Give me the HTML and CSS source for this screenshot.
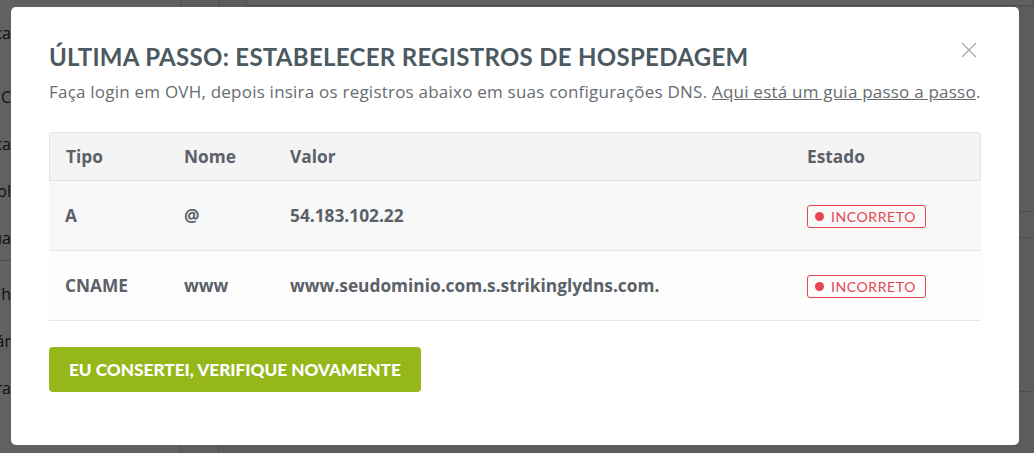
FILE: index.html
```html
<!DOCTYPE html>
<html lang="pt">
<head>
    <meta charset="UTF-8">
    <title>Registros de hospedagem</title>
    <link rel="stylesheet" href="styles.css">
</head>
<body>
    <div class="page">
        <div class="sidebar">
            <div class="side-item first">Publica</div>
            <div class="side-item">Domínio C</div>
            <div class="side-item">Estatística</div>
            <div class="side-item">Símbol</div>
            <div class="side-item">Loja virtua</div>
            <div class="side-sep"></div>
            <div class="side-item">Membros h</div>
            <div class="side-item">Formulár</div>
            <div class="side-item">Ajuda extra</div>
        </div>
        <div class="rail"></div>
        <div class="main">
            <div class="topbox"></div>
            <div class="hero"></div>
            <div class="row-line"></div>
            <div class="row-line tall"></div>
        </div>
    </div>

    <div class="overlay"></div>

    <div class="modal">
        <button class="close" aria-label="Fechar">
            <svg width="16" height="16" viewBox="0 0 16 16">
                <path d="M1 1 L15 15 M15 1 L1 15" stroke="#a9a9a9" stroke-width="1.3" fill="none"/>
            </svg>
        </button>
        <h2 class="title">Última passo: estabelecer registros de hospedagem</h2>
        <p class="lead">Faça login em OVH, depois insira os registros abaixo em suas configurações DNS. <a href="#">Aqui está um guia passo a passo</a>.</p>

        <table class="records">
            <thead>
                <tr>
                    <th class="c-type">Tipo</th>
                    <th class="c-name">Nome</th>
                    <th class="c-value">Valor</th>
                    <th class="c-state">Estado</th>
                </tr>
            </thead>
            <tbody>
                <tr>
                    <td>A</td>
                    <td>@</td>
                    <td>54.183.102.22</td>
                    <td><span class="badge"><i class="dot"></i>Incorreto</span></td>
                </tr>
                <tr>
                    <td>CNAME</td>
                    <td>www</td>
                    <td>www.seudominio.com.s.strikinglydns.com.</td>
                    <td><span class="badge"><i class="dot"></i>Incorreto</span></td>
                </tr>
            </tbody>
        </table>

        <button class="check">Eu consertei, verifique novamente</button>
    </div>
</body>
</html>
```

FILE: styles.css
```css
body {
    margin: 0;
    font-family: "Open Sans", sans-serif;
    background: #f2f2f2;
    height: 453px;
    overflow: hidden;
}

/* page behind the dialog */
.page {
    display: flex;
    height: 453px;
}

.sidebar {
    width: 180px;
    background: #ffffff;
    border-right: 1px solid #d0d0d0;
    padding-top: 20px;
}

.side-item {
    height: 47px;
    line-height: 26px;
    font-size: 16px;
    color: #2a2a2a;
    white-space: nowrap;
    direction: rtl;
    width: 11px;
    overflow: hidden;
}

.side-item.first {
    height: 64px;
}

.side-sep {
    border-top: 1px solid #c8c8c8;
    margin-top: -12px;
    height: 20px;
}

.rail {
    width: 37px;
    background: #f7f7f7;
    border-right: 1px solid #d4d4d4;
}

.main {
    flex: 1;
    padding: 0 0 0 27px;
}

.topbox {
    height: 5px;
    border: 1px solid #ccc;
    border-top: none;
    border-radius: 0 0 3px 3px;
    background: #fff;
}

.hero {
    height: 205px;
    background: #f2effc;
    border-bottom: 1px solid #c9c9c9;
}

.row-line {
    height: 25px;
    border-bottom: 1px solid #c9c9c9;
}

.row-line.tall {
    height: 153px;
}

.overlay {
    position: fixed;
    inset: 0;
    background: rgba(0, 0, 0, 0.62);
}

/* dialog */
.modal {
    position: fixed;
    left: 11px;
    top: 7px;
    width: 1008px;
    height: 438px;
    box-sizing: border-box;
    padding: 34px 38px 0 38px;
    background: #fff;
    border-radius: 5px;
}

.close {
    position: absolute;
    right: 42px;
    top: 35px;
    padding: 0;
    border: 0;
    background: none;
}

.title {
    margin: 0;
    font-family: Lato, sans-serif;
    font-weight: 700;
    font-size: 24px;
    line-height: 32px;
    text-transform: uppercase;
    color: #4b5961;
    letter-spacing: 0.3px;
}

.lead {
    margin: 6px 0 0;
    font-size: 17px;
    line-height: 25px;
    letter-spacing: 0.22px;
    white-space: nowrap;
    color: #676c70;
}

.lead a {
    color: #676c70;
}

.records {
    width: 100%;
    margin-top: 28px;
    border-collapse: separate;
    border-spacing: 0;
    font-size: 17.3px;
    font-weight: 700;
    color: #5b6168;
}

.records th {
    text-align: left;
    height: 47px;
    background: #f4f4f4;
    border-top: 1px solid #e3e3e3;
    border-bottom: 1px solid #e3e3e3;
    padding: 0 0 0 16px;
}

.records th:first-child {
    border-left: 1px solid #e3e3e3;
    border-radius: 4px 0 0 0;
}

.records th:last-child {
    border-right: 1px solid #e3e3e3;
    border-radius: 0 4px 0 0;
}

.records td {
    height: 69px;
    padding: 0 0 0 16px;
    border-bottom: 1px solid #e6e6e6;
}

.records tbody tr:first-child td {
    background: #f8f8f8;
}

.records tbody tr:last-child td {
    background: #fdfdfd;
}

.c-type { width: 102px; }
.c-name { width: 90px; }
.c-value { width: 501px; }

.badge {
    display: inline-flex;
    align-items: center;
    height: 21px;
    padding: 0 9px 0 7px;
    border: 1px solid #e5464f;
    border-radius: 3px;
    font-family: Lato, sans-serif;
    font-weight: 400;
    font-size: 14px;
    letter-spacing: 0.6px;
    text-transform: uppercase;
    color: #e5464f;
}

.dot {
    width: 9px;
    height: 9px;
    border-radius: 50%;
    background: #e5464f;
    margin-right: 7px;
}

.check {
    margin-top: 26px;
    height: 45px;
    padding: 0 20px;
    border: 0;
    border-radius: 4px;
    background: #95b71a;
    color: #fff;
    font-family: Lato, sans-serif;
    font-weight: 900;
    font-size: 17.2px;
    text-transform: uppercase;
}
```
